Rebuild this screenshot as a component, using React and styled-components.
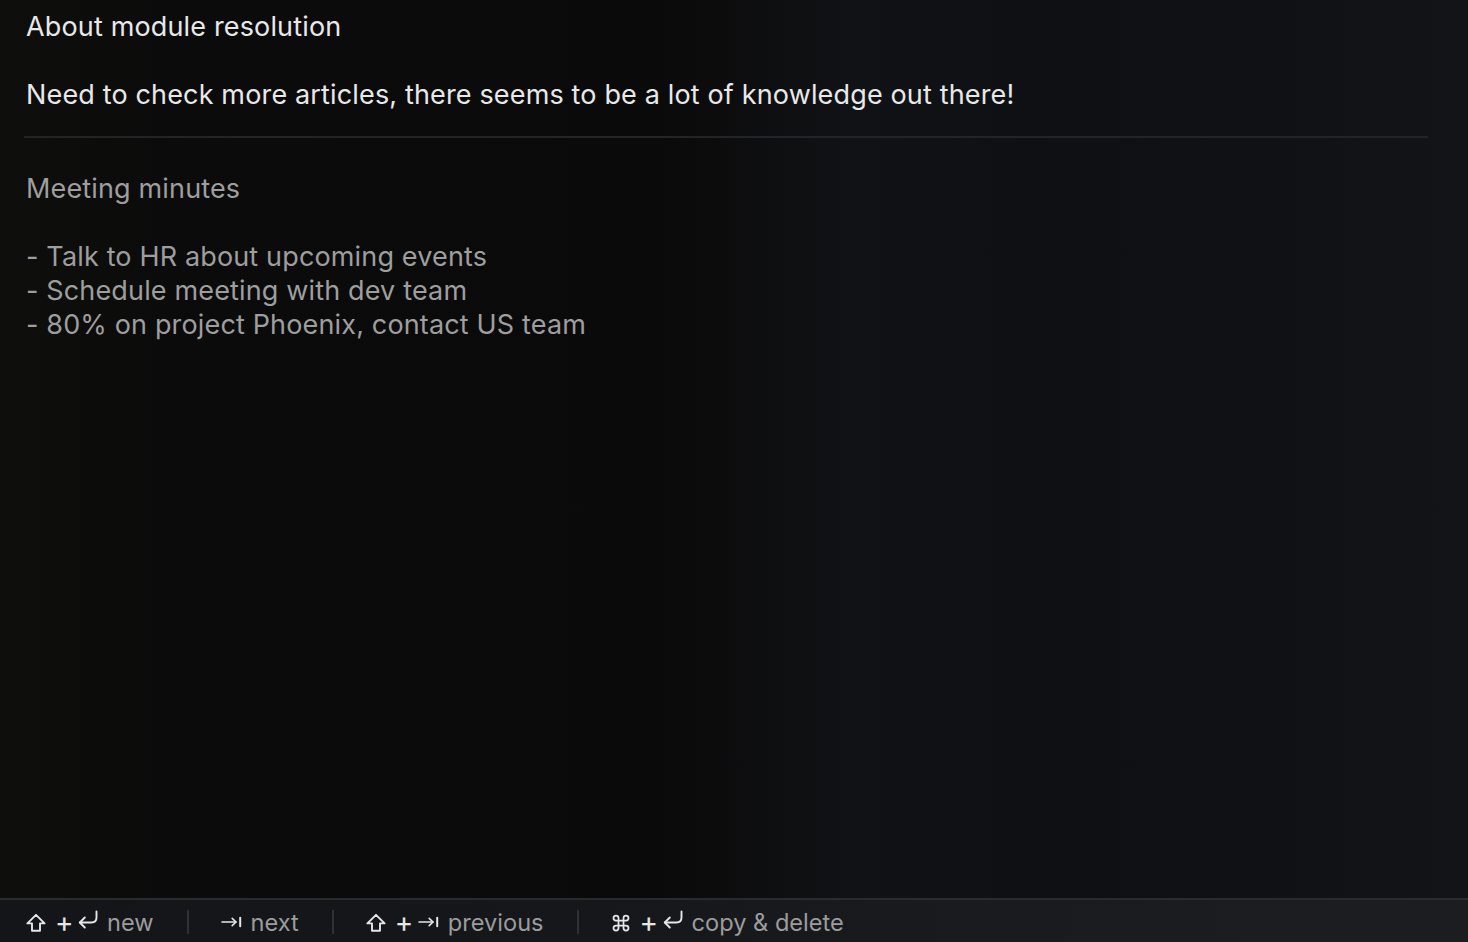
import React from 'react';
import styled, { createGlobalStyle } from 'styled-components';

const GlobalStyle = createGlobalStyle`
  html, body {
    margin: 0;
    padding: 0;
    height: 100%;
    background: #0b0b0b;
  }
  #root {
    height: 100%;
  }
`;

const Page = styled.div`
  height: 942px;
  display: flex;
  flex-direction: column;
  font-family: Inter, "Noto Sans", sans-serif;
  background: linear-gradient(
    90deg,
    #0e0e0c 0%,
    #0b0b0b 12%,
    #0a0a0a 45%,
    #111215 58%,
    #0e1013 70%,
    #101114 85%,
    #131418 100%
  );
`;

const Notes = styled.div`
  flex: 1;
  padding: 10px 40px 0 24px;
`;

const Note = styled.div`
  padding: 0 2px;
  font-size: 27px;
  line-height: 34px;
  letter-spacing: 0.15px;
  white-space: pre-wrap;
  color: ${props => (props.active ? '#e8e8e8' : '#9e9e9e')};
`;

const Divider = styled.hr`
  margin: 24px 0 34px;
  border: none;
  height: 2px;
  background: #232428;
`;

const Footer = styled.div`
  height: 44px;
  border-top: 2px solid #2a2b2f;
  background: linear-gradient(90deg, #141518 0%, #16171a 40%, #1a1c20 75%, #1b1d21 100%);
  display: flex;
  align-items: center;
  padding: 2px 0 0 26px;
  box-sizing: border-box;
`;

const Shortcut = styled.div`
  display: flex;
  align-items: center;
  gap: 9px;
  font-size: 23.6px;
  color: #9c9c9c;
`;

const Plus = styled.span`
  display: inline-block;
  width: 14px;
  text-align: center;
  color: #e6e6e6;
  font-size: 28px;
  line-height: 1;
`;

const Icon = styled.svg`
  width: ${props => props.w || 20}px;
  height: 20px;
  flex: none;
  stroke: #e6e6e6;
  fill: none;
  stroke-width: 1.9;
  stroke-linecap: round;
  stroke-linejoin: round;
  margin-top: ${props => props.dy || 0}px;
`;

const Sep = styled.div`
  width: 2px;
  height: 24px;
  background: #303136;
  margin: 0 32px 0 33px;
`;

const ShiftIcon = () => (
  <Icon viewBox="0 0 20 20" dy={1}>
    <path d="M10 1.8 L18.6 10.4 H14 V17.8 H6 V10.4 H1.4 Z" />
  </Icon>
);

const ReturnIcon = () => (
  <Icon viewBox="0 0 20 20" dy={-4}>
    <path d="M18.5 1.5 V7.5 Q18.5 12.5 13.5 12.5 H1.8" />
    <path d="M6.8 7.5 L1.8 12.5 L6.8 17.5" />
  </Icon>
);

const TabIcon = () => (
  <Icon viewBox="0 0 21 20" w={21}>
    <path d="M1 10 H15" strokeWidth="1.6" />
    <path d="M11.2 6.4 L15 10 L11.2 13.6" strokeWidth="1.6" />
    <path d="M19.2 5.8 V14.2" strokeWidth="2" />
  </Icon>
);

const CmdIcon = () => (
  <Icon viewBox="0 0 24 24" w={20} dy={1}>
    <path
      d="M15 6v12a3 3 0 1 0 3-3H6a3 3 0 1 0 3 3V6a3 3 0 1 0-3 3h12a3 3 0 1 0-3-3"
      strokeWidth="2.1"
    />
  </Icon>
);

const shortcuts = [
  { keys: [<ShiftIcon key="a" />, <Plus key="b">+</Plus>, <ReturnIcon key="c" />], label: 'new' },
  { keys: [<TabIcon key="a" />], label: 'next' },
  { keys: [<ShiftIcon key="a" />, <Plus key="b">+</Plus>, <TabIcon key="c" />], label: 'previous' },
  { keys: [<CmdIcon key="a" />, <Plus key="b">+</Plus>, <ReturnIcon key="c" />], label: 'copy & delete' },
];

export default function App() {
  return (
    <>
      <GlobalStyle />
      <Page>
        <Notes>
          <Note active>
            {'About module resolution\n\nNeed to check more articles, there seems to be a lot of knowledge out there!'}
          </Note>
          <Divider />
          <Note>
            {'Meeting minutes\n\n- Talk to HR about upcoming events\n- Schedule meeting with dev team\n- 80% on project Phoenix, contact US team'}
          </Note>
        </Notes>
        <Footer>
          {shortcuts.map((s, i) => (
            <React.Fragment key={s.label}>
              {i > 0 && <Sep />}
              <Shortcut>
                {s.keys}
                <span>{s.label}</span>
              </Shortcut>
            </React.Fragment>
          ))}
        </Footer>
      </Page>
    </>
  );
}
